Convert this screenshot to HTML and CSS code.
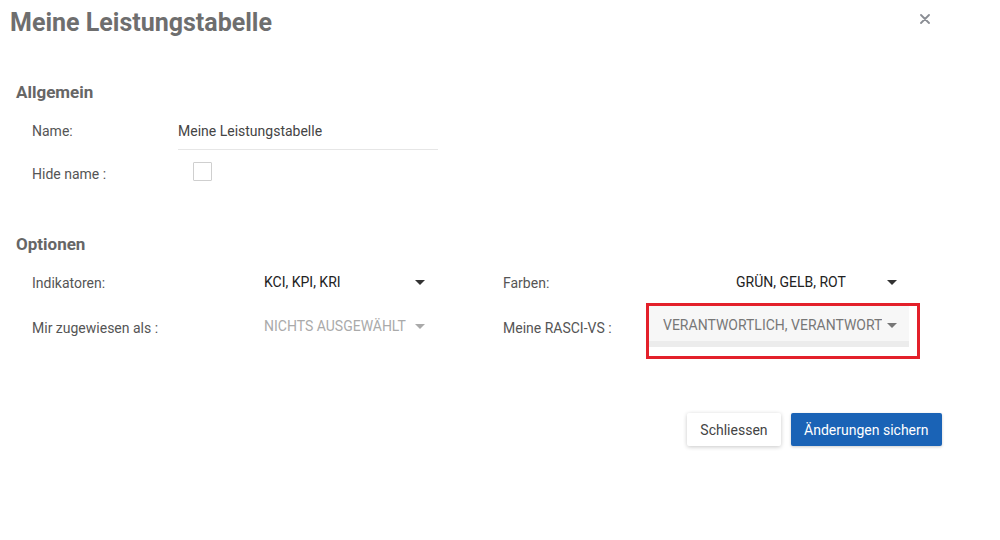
FILE: index.html
```html
<!DOCTYPE html>
<html lang="de">
<head>
  <meta charset="UTF-8" />
  <title>Meine Leistungstabelle</title>
  <link rel="stylesheet" href="styles.css">
</head>
<body>
  <div class="dialog">
    <!-- Dialog header -->
    <header class="dialog-head">
      <h1>Meine Leistungstabelle</h1>
      <button class="btn-close" aria-label="Schliessen">
        <svg width="10" height="10" viewBox="0 0 10 10"><path d="M1 1 L9 9 M9 1 L1 9" stroke="#8a8d94" stroke-width="1.8" stroke-linecap="round"/></svg>
      </button>
    </header>

    <!-- Allgemein -->
    <section class="group">
      <h2>Allgemein</h2>
      <div class="field">
        <label class="field-label">Name:</label>
        <div class="text-input">Meine Leistungstabelle</div>
      </div>
      <div class="field field-check">
        <label class="field-label">Hide name :</label>
        <span class="checkbox"></span>
      </div>
    </section>

    <!-- Optionen -->
    <section class="group group-options">
      <h2>Optionen</h2>
      <div class="options-grid">
        <div class="opt-cell">
          <span class="opt-label">Indikatoren:</span>
          <div class="select"><span class="select-value">KCI, KPI, KRI</span><span class="caret"></span></div>
        </div>
        <div class="opt-cell">
          <span class="opt-label">Farben:</span>
          <div class="select"><span class="select-value">GRÜN, GELB, ROT</span><span class="caret"></span></div>
        </div>
        <div class="opt-cell opt-cell-low">
          <span class="opt-label">Mir zugewiesen als :</span>
          <div class="select muted"><span class="select-value">NICHTS AUSGEWÄHLT</span><span class="caret"></span></div>
        </div>
        <div class="opt-cell">
          <span class="opt-label opt-label-short">Meine RASCI-VS :</span>
          <div class="highlight">
            <div class="select select-open"><span class="select-value">VERANTWORTLICH, VERANTWORT</span><span class="caret"></span></div>
          </div>
        </div>
      </div>
    </section>

    <div class="actions">
      <button class="btn btn-light">Schliessen</button>
      <button class="btn btn-primary">Änderungen sichern</button>
    </div>
  </div>
</body>
</html>
```

FILE: styles.css
```css
/* BASE */
* {
  margin: 0;
  padding: 0;
  box-sizing: border-box;
}
body {
  font-family: Roboto, "Liberation Sans", Arial, sans-serif;
  font-size: 14px;
  color: #555;
  background: #fff;
}
.dialog {
  width: 1000px;
  height: 540px;
}

/* HEADER */
.dialog-head {
  display: flex;
  justify-content: space-between;
  align-items: flex-start;
  padding: 9px 70px 0 10px;
}
h1 {
  font-size: 25px;
  line-height: 28px;
  font-weight: 700;
  color: #6e6e6e;
}
.btn-close {
  border: none;
  background: none;
  margin-top: 5px;
  width: 10px;
  height: 10px;
  cursor: pointer;
}
.btn-close svg {
  display: block;
}

/* SECTIONS */
.group {
  padding-left: 16px;
}
h2 {
  font-size: 17px;
  line-height: 20px;
  font-weight: 700;
  color: #666;
}
.group:first-of-type h2 {
  margin-top: 45px;
}
.group-options h2 {
  margin-top: 50px;
}

/* ALLGEMEIN FIELDS */
.field {
  display: flex;
  align-items: flex-start;
  padding-left: 16px;
}
.field:first-of-type {
  margin-top: 10px;
}
.field-label {
  width: 146px;
  line-height: 20px;
  color: #555;
}
.field:first-of-type .field-label {
  padding-top: 9px;
}
.text-input {
  width: 260px;
  line-height: 20px;
  padding: 9px 0 8px;
  color: #444;
  border-bottom: 1px solid #e6e6e6;
}
.field-check {
  margin-top: 12px;
}
.field-check .field-label {
  padding-top: 2px;
}
.checkbox {
  display: block;
  width: 19px;
  height: 19px;
  margin-left: 15px;
  border: 1px solid #cfcfcf;
  border-radius: 1px;
}

/* OPTIONEN */
.options-grid {
  display: grid;
  grid-template-columns: 471px 1fr;
  row-gap: 10px;
  margin-top: 18px;
  padding-left: 16px;
}
.opt-cell {
  display: flex;
  align-items: flex-start;
}
.opt-cell-low {
  padding-top: 13px;
}
.opt-label {
  width: 232px;
  line-height: 20px;
  padding-top: 1px;
  color: #555;
}
.opt-cell-low .opt-label {
  padding-top: 2px;
}
.opt-cell:nth-child(2) .opt-label {
  width: 233px;
}
.opt-label-short {
  width: 143px;
  padding-top: 15px;
}
.select {
  display: flex;
  align-items: center;
  justify-content: space-between;
  width: 166px;
  line-height: 20px;
  padding-right: 5px;
  color: #222;
}
.select-value {
  white-space: nowrap;
  overflow: hidden;
}
.select.muted {
  color: #aaa;
}
.caret {
  flex: none;
  width: 0;
  height: 0;
  border-left: 5px solid transparent;
  border-right: 5px solid transparent;
  border-top: 5px solid #333;
}
.select.muted .caret {
  border-top-color: #aaa;
}

/* Highlighted (open) select */
.highlight {
  border: 3px solid #e3202a;
  padding: 0 8px 9px 0;
}
.select-open {
  width: 260px;
  padding: 9px 12px 6px 14px;
  background: #f7f7f7;
  border-bottom: 6px solid #ececec;
  color: #777;
}
.select-open .select-value {
  margin-right: 4px;
}
.select-open .caret {
  border-top-color: #777;
}

/* ACTIONS */
.actions {
  display: flex;
  justify-content: flex-end;
  gap: 10px;
  margin-top: 54px;
  padding-right: 58px;
}
.btn {
  height: 33px;
  padding: 0 13px;
  font-family: inherit;
  font-size: 14px;
  border: none;
  border-radius: 2px;
  cursor: pointer;
}
.btn-light {
  background: #fff;
  color: #444;
  box-shadow: 0 1px 4px rgba(0,0,0,0.22);
}
.btn-primary {
  background: #1a63b6;
  color: #fff;
  padding: 0 13.5px;
  box-shadow: 0 1px 3px rgba(0,0,0,0.2);
}
```
